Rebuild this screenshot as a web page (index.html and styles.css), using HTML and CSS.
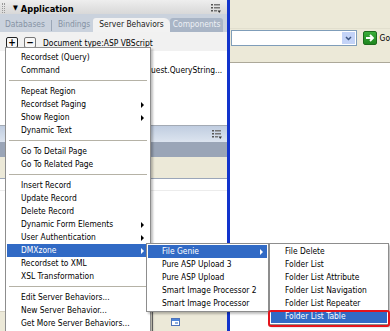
FILE: index.html
```html
<html>

<head>
  <meta charset="UTF-8">
  <meta name="viewport" content="width=device-width, initial-scale=1.0">
  <title>Server Behaviors</title>
  <link rel="stylesheet" href="styles.css">
</head>

<body>
  <div class="screen">
    <div class="panel">
      <div class="titlebar">
        <span class="grip"></span>
        <span class="caret">&#9660;</span>
        <span class="title">Application</span>
        <svg class="opts" width="10" height="9" viewBox="0 0 10 9">
          <rect x="0" y="0" width="2" height="1.5" fill="#555"/>
          <rect x="3" y="0" width="6" height="1.5" fill="#777"/>
          <rect x="0" y="3" width="2" height="1.5" fill="#555"/>
          <rect x="3" y="3" width="6" height="1.5" fill="#777"/>
          <rect x="0" y="6" width="2" height="1.5" fill="#555"/>
          <rect x="3" y="6" width="3" height="1.5" fill="#777"/>
          <path d="M6.5 6.5h3.5l-1.75 2.5z" fill="#333"/>
        </svg>
      </div>
      <div class="tabs">
        <span class="tab">Databases</span>
        <span class="tab-sep"></span>
        <span class="tab">Bindings</span>
        <span class="tab active">Server Behaviors</span>
        <span class="tab dim">Components</span>
      </div>
      <div class="toolbar">
        <span class="tool-btn on">+</span>
        <span class="tool-btn">&minus;</span>
        <span class="doc-type">Document type:ASP VBScript</span>
      </div>
      <div class="tree">
        <div class="tree-row">uest.QueryString...</div>
      </div>
      <div class="subhead">
        <svg class="opts" width="10" height="9" viewBox="0 0 10 9">
          <rect x="0" y="0" width="2" height="1.5" fill="#555"/>
          <rect x="3" y="0" width="6" height="1.5" fill="#777"/>
          <rect x="0" y="3" width="2" height="1.5" fill="#555"/>
          <rect x="3" y="3" width="6" height="1.5" fill="#777"/>
          <rect x="0" y="6" width="2" height="1.5" fill="#555"/>
          <rect x="3" y="6" width="3" height="1.5" fill="#777"/>
          <path d="M6.5 6.5h3.5l-1.75 2.5z" fill="#333"/>
        </svg>
      </div>
      <div class="slate"></div>
      <div class="beige"></div>
      <div class="list">
        <div class="list-row"></div>
      </div>
      <div class="files-bar">
        <span class="vline"></span>
        <svg width="9" height="8" viewBox="0 0 9 8">
          <rect x="0.5" y="0.5" width="8" height="7" fill="#fff" stroke="#4f73b8"/>
          <rect x="1" y="1" width="7" height="2" fill="#4f86d9"/>
          <rect x="4" y="4" width="3" height="2" fill="#8fb0e0"/>
        </svg>
      </div>
    </div>

    <div class="divider"></div>

    <div class="doc">
      <div class="doc-top"></div>
      <div class="address">
        <div class="combo">
          <span class="combo-btn">
            <svg width="7" height="5" viewBox="0 0 7 5"><path d="M1 1l2.5 2.5L6 1" stroke="#3d5580" stroke-width="1.5" fill="none"/></svg>
          </span>
        </div>
        <span class="go">
          <svg width="10" height="10" viewBox="0 0 10 10"><path d="M1 5h7M5 2l3 3-3 3" stroke="#fff" stroke-width="1.8" fill="none"/></svg>
        </span>
        <span class="go-text">Go</span>
      </div>
      <div class="doc-gap"></div>
      <div class="doc-body"></div>
    </div>

    <div class="menu main-menu">
      <div class="item">Recordset (Query)</div>
      <div class="item">Command</div>
      <div class="sep"></div>
      <div class="item">Repeat Region</div>
      <div class="item sub">Recordset Paging</div>
      <div class="item sub">Show Region</div>
      <div class="item">Dynamic Text</div>
      <div class="sep"></div>
      <div class="item">Go To Detail Page</div>
      <div class="item">Go To Related Page</div>
      <div class="sep"></div>
      <div class="item">Insert Record</div>
      <div class="item">Update Record</div>
      <div class="item">Delete Record</div>
      <div class="item sub">Dynamic Form Elements</div>
      <div class="item sub">User Authentication</div>
      <div class="item sub hot">DMXzone</div>
      <div class="item">Recordset to XML</div>
      <div class="item">XSL Transformation</div>
      <div class="sep"></div>
      <div class="item">Edit Server Behaviors...</div>
      <div class="item">New Server Behavior...</div>
      <div class="item">Get More Server Behaviors...</div>
    </div>

    <div class="menu dmx-menu">
      <div class="item sub hot">File Genie</div>
      <div class="item">Pure ASP Upload 3</div>
      <div class="item">Pure ASP Upload</div>
      <div class="item">Smart Image Processor 2</div>
      <div class="item">Smart Image Processor</div>
    </div>

    <div class="menu genie-menu">
      <div class="item">File Delete</div>
      <div class="item">Folder List</div>
      <div class="item">Folder List Attribute</div>
      <div class="item">Folder List Navigation</div>
      <div class="item">Folder List Repeater</div>
      <div class="item hot">Folder List Table</div>
    </div>

    <div class="mark"></div>
  </div>
</body>

</html>
```

FILE: styles.css
```css
* {
  margin: 0;
  padding: 0;
  box-sizing: border-box;
}

html,
body {
  width: 390px;
  height: 331px;
  overflow: hidden;
}

body {
  font-family: "DejaVu Sans Condensed", "DejaVu Sans", sans-serif;
  font-stretch: condensed;
  font-size: 8.4px;
  color: #000;
  background: #fff;
}

.screen {
  position: relative;
  display: flex;
  width: 390px;
  height: 331px;
}

/* left docked panel */
.panel {
  width: 232px;
  display: flex;
  flex-direction: column;
  background: #fff;
}

.titlebar {
  height: 14px;
  display: flex;
  align-items: center;
  padding: 2px 3px 0 2px;
  background: linear-gradient(#eeeeee, #d8d8d8);
}

.grip {
  width: 3px;
  height: 10px;
  border-left: 1px dotted #999;
  border-right: 1px dotted #999;
  margin-right: 8px;
}

.caret {
  font-size: 7px;
  margin-right: 3px;
}

.title {
  flex: 1;
  font-weight: bold;
  font-size: 9.2px;
}

.opts {
  margin-right: 3px;
}

.tabs {
  height: 18px;
  display: flex;
  align-items: flex-end;
  padding-left: 5px;
  background: #cad2dd;
}

.tab {
  height: 14px;
  line-height: 13px;
  white-space: nowrap;
  color: #8692a4;
}

.tab-sep {
  width: 1px;
  height: 11px;
  margin: 0 6px 1px 6px;
  background: #9aa6b6;
}

.tab.active {
  margin-left: 3px;
  padding: 0 6px;
  color: #1a1a1a;
  background: #f2f2f2;
  border-radius: 3px 6px 0 0;
}

.tab.dim {
  padding: 0 3px;
  color: #eef1f5;
  background: #a9b5c6;
  border-radius: 3px 3px 0 0;
}

.toolbar {
  height: 19px;
  display: flex;
  align-items: center;
  padding: 2px 0 0 6px;
  background: #f1f1f1;
}

.tool-btn {
  width: 12px;
  height: 11px;
  margin-right: 6px;
  display: flex;
  align-items: center;
  justify-content: center;
  font-weight: bold;
  font-size: 10px;
  line-height: 1;
  border: 1px solid #777;
  border-radius: 2px;
  background: #f7f7f7;
}

.tool-btn.on {
  border-color: #222;
}

.doc-type {
  margin-left: 1px;
  white-space: nowrap;
}

.tree {
  height: 74px;
  padding-top: 13px;
  background: #fff;
}

.tree-row {
  height: 13px;
  line-height: 13px;
  padding-left: 151px;
  white-space: nowrap;
  overflow: hidden;
}

.subhead {
  height: 17px;
  display: flex;
  align-items: center;
  justify-content: flex-end;
  padding-right: 2px;
  border-top: 1px solid #a3aab4;
  background: linear-gradient(#c0cde0, #dce4ef);
}

.slate {
  height: 15px;
  background: #9aa5b7;
}

.beige {
  height: 22px;
  background: #ece9d8;
  border-bottom: 1px solid #9ba6b9;
}

.list {
  flex: 1;
  background: #fff;
}

.list-row {
  height: 12px;
  border-bottom: 1px solid #ececec;
}

.files-bar {
  height: 20px;
  display: flex;
  align-items: center;
  padding-left: 152px;
  background: #ece9d8;
  border-top: 1px solid #d6d2c2;
}

.vline {
  width: 1px;
  height: 20px;
  margin-right: 18px;
  background: #6f6f6f;
}

.divider {
  width: 3px;
  background: #1234cc;
}

/* document window */
.doc {
  flex: 1;
  display: flex;
  flex-direction: column;
}

.doc-top {
  height: 29px;
  background: #ece9d8;
  border-bottom: 1px solid #e2dfce;
}

.address {
  height: 18px;
  display: flex;
  align-items: center;
  padding-left: 1px;
  background: #ece9d8;
}

.combo {
  width: 126px;
  height: 16px;
  display: flex;
  justify-content: flex-end;
  padding: 1px;
  background: #fff;
  border: 1px solid #7f9db9;
}

.combo-btn {
  width: 13px;
  display: flex;
  align-items: center;
  justify-content: center;
  background: #c3d3f7;
}

.go {
  width: 14px;
  height: 14px;
  margin-left: 6px;
  display: flex;
  align-items: center;
  justify-content: center;
  background: linear-gradient(#3aad3a, #1f861f);
  border: 1px solid #1c6b1c;
  border-radius: 2px;
}

.go-text {
  margin-left: 3px;
}

.doc-gap {
  height: 16px;
  background: #ece9d8;
  border-bottom: 1px solid #aca899;
}

.doc-body {
  flex: 1;
  background: #fff;
}

/* popup menus */
.menu {
  position: absolute;
  background: #fff;
  border: 1px solid #8d8d8d;
  box-shadow: 2px 2px 2px rgba(0, 0, 0, 0.25);
}

.main-menu {
  left: 5px;
  top: 47px;
  width: 146px;
  padding: 3px 2px 3px 1px;
}

.dmx-menu {
  left: 146px;
  top: 243px;
  width: 123px;
  padding: 1px;
}

.genie-menu {
  left: 269px;
  top: 243px;
  width: 120px;
  padding: 1px;
}

.item {
  position: relative;
  height: 13px;
  line-height: 13px;
  padding-left: 14px;
  white-space: nowrap;
}

.item.sub::after {
  content: "";
  position: absolute;
  right: 4px;
  top: 3.5px;
  border-left: 3px solid #000;
  border-top: 3px solid transparent;
  border-bottom: 3px solid transparent;
}

.item.hot {
  color: #fff;
  background: #316ac5;
}

.item.hot::after {
  border-left-color: #fff;
}

.sep {
  height: 8px;
  margin: 0 1px 0 2px;
  padding-top: 3px;
}

.sep::before {
  content: "";
  display: block;
  height: 1px;
  background: #b5b2a6;
}

.mark {
  position: absolute;
  left: 268px;
  top: 310px;
  width: 122px;
  height: 17px;
  border: 2px solid #e3141c;
  border-radius: 3px;
}
```
